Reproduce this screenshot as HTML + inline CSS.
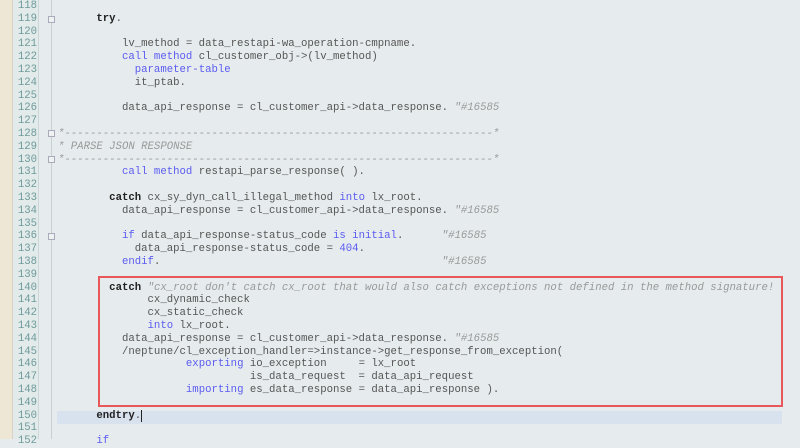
<!DOCTYPE html>
<html><head><meta charset="utf-8"><style>
body{margin:0;width:800px;height:439px;overflow:hidden;background:#e6ecee;position:relative;font-family:"Liberation Mono",monospace;}
.beige{position:absolute;left:0;top:0;width:12px;height:439px;background:#efe7d6;border-right:1px solid #d8d2c4;}
.nums{position:absolute;left:13px;top:0;width:25px;height:439px;background:#e2eaea;border-right:1px solid #cdd6d6;}
.fold{position:absolute;left:51px;top:0;width:1px;height:439px;background:#c8d0d0;}
.l{position:absolute;left:0;height:13px;line-height:13px;font-size:10.67px;white-space:pre;width:800px;}
.n{position:absolute;left:13px;width:24px;text-align:right;color:#6e9a9a;}
.c{position:absolute;left:58px;color:#555;}
.k{color:#5b5bf0}.b{color:#222;font-weight:bold}.m{color:#999;font-style:italic}
.hl{position:absolute;left:57px;width:725px;height:13px;background:#d8e2ee;}
.box{position:absolute;left:98px;top:276px;width:681px;height:127px;border:2px solid #e8585a;}
.fb{position:absolute;left:48px;width:7px;height:7px;border:1px solid #aab;background:#eef2f2;box-sizing:border-box;}
</style></head><body>
<div class="beige"></div><div class="nums"></div><div class="fold"></div>
<div class="hl" style="top:411px"></div>
<div class="fb" style="top:16px"></div><div class="fb" style="top:130px"></div><div class="fb" style="top:156px"></div><div class="fb" style="top:233px"></div>
<div class="l" style="top:0px"><span class="n">118</span><span class="c"></span></div>
<div class="l" style="top:12.8px"><span class="n">119</span><span class="c">      <span class="b">try</span>.</span></div>
<div class="l" style="top:25.6px"><span class="n">120</span></div>
<div class="l" style="top:38.4px"><span class="n">121</span><span class="c">          lv_method = data_restapi-wa_operation-cmpname.</span></div>
<div class="l" style="top:51.2px"><span class="n">122</span><span class="c">          <span class="k">call method</span> cl_customer_obj-&gt;(lv_method)</span></div>
<div class="l" style="top:64px"><span class="n">123</span><span class="c">            <span class="k">parameter-table</span></span></div>
<div class="l" style="top:76.8px"><span class="n">124</span><span class="c">            it_ptab.</span></div>
<div class="l" style="top:89.6px"><span class="n">125</span></div>
<div class="l" style="top:102.4px"><span class="n">126</span><span class="c">          data_api_response = cl_customer_api-&gt;data_response. <span class="m">"#16585</span></span></div>
<div class="l" style="top:115.2px"><span class="n">127</span></div>
<div class="l" style="top:128px"><span class="n">128</span><span class="c m">*-------------------------------------------------------------------*</span></div>
<div class="l" style="top:140.8px"><span class="n">129</span><span class="c m">* PARSE JSON RESPONSE</span></div>
<div class="l" style="top:153.6px"><span class="n">130</span><span class="c m">*-------------------------------------------------------------------*</span></div>
<div class="l" style="top:166.4px"><span class="n">131</span><span class="c">          <span class="k">call method</span> restapi_parse_response( ).</span></div>
<div class="l" style="top:179.2px"><span class="n">132</span></div>
<div class="l" style="top:192px"><span class="n">133</span><span class="c">        <span class="b">catch</span> cx_sy_dyn_call_illegal_method <span class="k">into</span> lx_root.</span></div>
<div class="l" style="top:204.8px"><span class="n">134</span><span class="c">          data_api_response = cl_customer_api-&gt;data_response. <span class="m">"#16585</span></span></div>
<div class="l" style="top:217.6px"><span class="n">135</span></div>
<div class="l" style="top:230.4px"><span class="n">136</span><span class="c">          <span class="k">if</span> data_api_response-status_code <span class="k">is initial</span>.      <span class="m">"#16585</span></span></div>
<div class="l" style="top:243.2px"><span class="n">137</span><span class="c">            data_api_response-status_code = <span class="k">404</span>.</span></div>
<div class="l" style="top:256px"><span class="n">138</span><span class="c">          <span class="k">endif</span>.                                            <span class="m">"#16585</span></span></div>
<div class="l" style="top:268.8px"><span class="n">139</span></div>
<div class="l" style="top:281.6px"><span class="n">140</span><span class="c">        <span class="b">catch</span> <span class="m">"cx_root don't catch cx_root that would also catch exceptions not defined in the method signature!</span></span></div>
<div class="l" style="top:294.4px"><span class="n">141</span><span class="c">              cx_dynamic_check</span></div>
<div class="l" style="top:307.2px"><span class="n">142</span><span class="c">              cx_static_check</span></div>
<div class="l" style="top:320px"><span class="n">143</span><span class="c">              <span class="k">into</span> lx_root.</span></div>
<div class="l" style="top:332.8px"><span class="n">144</span><span class="c">          data_api_response = cl_customer_api-&gt;data_response. <span class="m">"#16585</span></span></div>
<div class="l" style="top:345.6px"><span class="n">145</span><span class="c">          /neptune/cl_exception_handler=&gt;instance-&gt;get_response_from_exception(</span></div>
<div class="l" style="top:358.4px"><span class="n">146</span><span class="c">                    <span class="k">exporting</span> io_exception     = lx_root</span></div>
<div class="l" style="top:371.2px"><span class="n">147</span><span class="c">                              is_data_request  = data_api_request</span></div>
<div class="l" style="top:384px"><span class="n">148</span><span class="c">                    <span class="k">importing</span> es_data_response = data_api_response ).</span></div>
<div class="l" style="top:396.8px"><span class="n">149</span></div>
<div class="l" style="top:409.6px"><span class="n">150</span><span class="c">      <span class="b">endtry</span>.<span style="border-left:1px solid #222"></span></span></div>
<div class="l" style="top:422.4px"><span class="n">151</span></div>
<div class="l" style="top:435.2px"><span class="n">152</span><span class="c">      <span class="k">if</span></span></div>
<div class="box"></div>
</body></html>
